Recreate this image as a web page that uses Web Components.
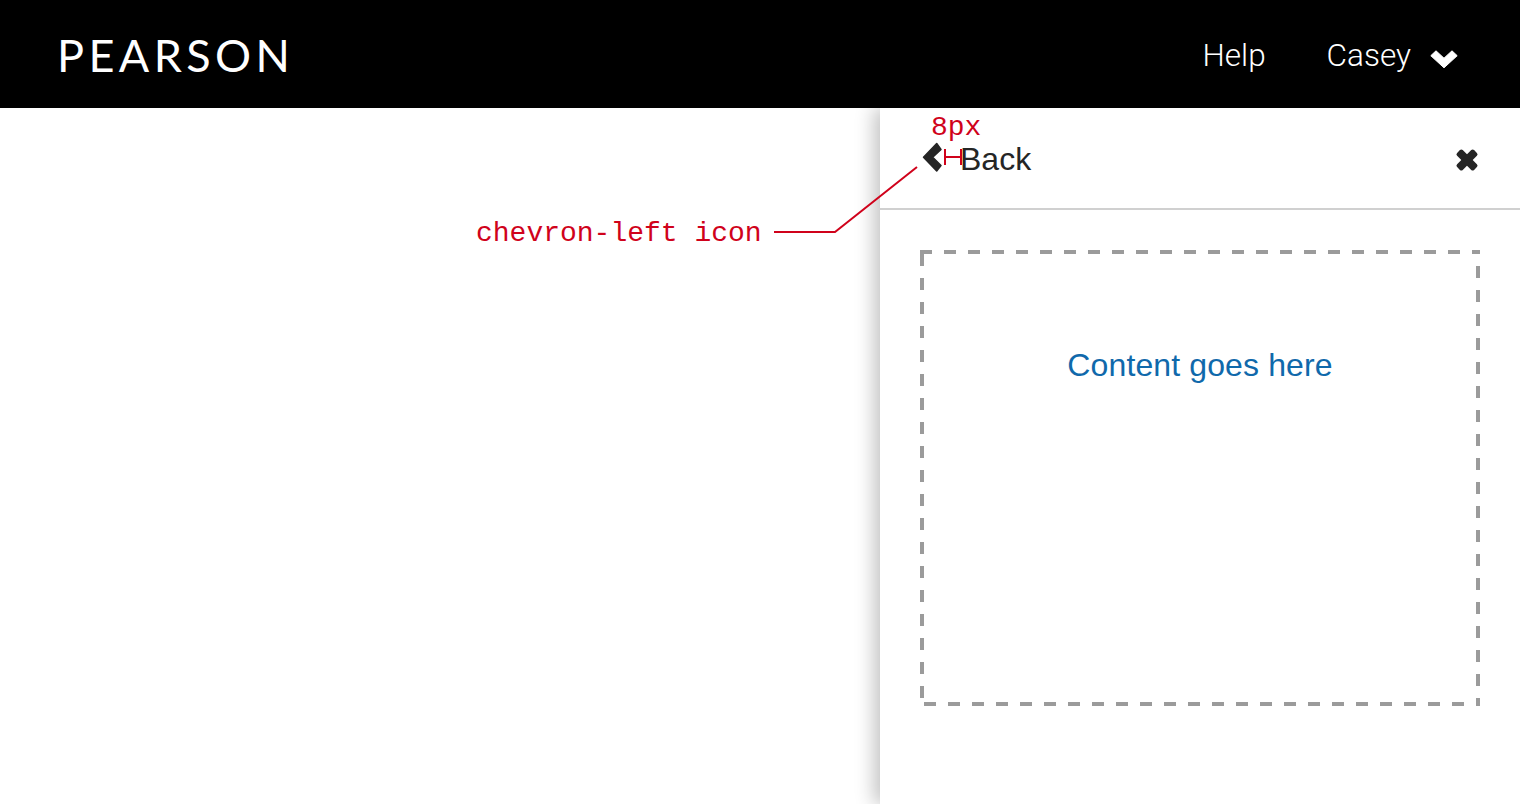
<!DOCTYPE html>
<html>
<head>
<meta charset="utf-8">
<style>
    html, body { margin: 0; height: 100%; }
    body { background: #fff; overflow: hidden; font-family: "Liberation Sans", Arial, sans-serif; }
    app-page { height: 804px; }
</style>
</head>
<body>
<app-page>
    <site-header slot="header" username="Casey"></site-header>
    <side-panel slot="main">
        <content-box>Content goes here</content-box>
    </side-panel>
</app-page>

<template id="page-template">
    <style>
        :host { display: grid; grid-template-rows: 108px 1fr; position: relative; overflow: hidden; }
        main { display: flex; justify-content: flex-end; min-height: 0; }
    </style>
    <slot name="header"></slot>
    <main><slot name="main"></slot></main>
</template>

<template id="header-template">
    <style>
        :host { display: flex; align-items: center; justify-content: space-between; background: #000; color: #fff; padding: 0 60px; }
        #logo { font: 400 45px/1 Lato, "Liberation Sans", sans-serif; letter-spacing: 4.4px; padding-top: 2px; margin-left: -3px; }
        nav { display: flex; align-items: center; font: 300 31.5px/1 Roboto, "Liberation Sans", sans-serif; padding-top: 4px; }
        #help { margin-right: 61px; }
        svg { display: block; width: 30px; height: 20px; margin-left: 19px; margin-top: 8px; }
    </style>
    <div id="logo">PEARSON</div>
    <nav>
        <span id="help">Help</span>
        <span id="user"></span>
        <svg viewBox="0 0 30 20"><path d="M.8 5.700 6 .8 14 8.200 22 .8 27.200 5.700 14 17.800Z" fill="#fff" stroke="#fff" stroke-width="1" stroke-linejoin="round"/></svg>
    </nav>
</template>

<template id="panel-template">
    <style>
        :host { display: flex; flex-direction: column; position: relative; width: 640px; height: 100%; background: #fff; box-shadow: -6px 0 18px rgba(0,0,0,.24); color: #252525; }
        header { display: flex; align-items: center; justify-content: space-between; height: 102px; box-sizing: border-box; padding: 0 40px; border-bottom: 2px solid #d0d0d0; flex: none; }
        #back { display: flex; align-items: center; font-size: 32px; line-height: 1; }
        #back span { padding-top: 2px; }
        #back svg { width: 24px; height: 34px; margin-right: 16px; display: block; }
        #close { display: block; width: 26px; height: 26px; margin-top: 4px; }
        #body { padding: 40px; }
    </style>
    <header>
        <div id="back">
            <svg viewBox="0 0 24 34"><path d="M3.500 16.300 16.700 2.500 21 8.500 12.700 16.300 21 24.500 16.700 30 Z" fill="#252525" stroke="#252525" stroke-width="1.500" stroke-linejoin="round"/></svg>
            <span>Back</span>
        </div>
        <svg id="close" viewBox="0 0 26 26">
            <rect x="1" y="9" width="24" height="8" rx="2" fill="#252525" transform="rotate(45 13 13)"/>
            <rect x="1" y="9" width="24" height="8" rx="2" fill="#252525" transform="rotate(-45 13 13)"/>
        </svg>
    </header>
    <div id="body"><slot></slot></div>
    <spec-note></spec-note>
</template>

<template id="box-template">
    <style>
        :host { display: block; position: relative; height: 456px; box-sizing: border-box; padding-top: 95px; text-align: center; color: #1069ab; font-size: 32px; line-height: 40px; letter-spacing: .12px; }
        svg { position: absolute; inset: 0; width: 100%; height: 100%; }
        path { fill: none; stroke: #9b9b9b; stroke-width: 4; stroke-dasharray: 12 12; }
    </style>
    <svg viewBox="0 0 560 456">
        <path d="M0 2H560"/>
        <path d="M558 16V456"/>
        <path d="M4 454H556"/>
        <path d="M2 4V452"/>
    </svg>
    <slot></slot>
</template>

<template id="note-template">
    <style>
        :host { position: absolute; left: -880px; top: -108px; width: 1520px; height: 804px; pointer-events: none; color: #d0021b; font: 28px/32px "Liberation Mono", monospace; }
        span { position: absolute; white-space: pre; }
        #label { left: 476px; top: 218px; }
        #gap { left: 931px; top: 112px; }
        svg { position: absolute; inset: 0; width: 100%; height: 100%; }
        path { fill: none; stroke: #d0021b; stroke-width: 2; }
    </style>
    <svg viewBox="0 0 1520 804">
        <path d="M774 232H835L917 167"/>
        <path d="M945 149V165M945 157H961M961 149V165"/>
    </svg>
    <span id="label">chevron-left icon</span>
    <span id="gap">8px</span>
</template>

<script>
    function stamp(host, id) {
        host.attachShadow({mode: "open"})
        host.shadowRoot.appendChild(document.getElementById(id).content.cloneNode(true))
    }

    class AppPage extends HTMLElement {
        constructor() { super(); stamp(this, "page-template") }
    }
    class SiteHeader extends HTMLElement {
        constructor() {
            super()
            stamp(this, "header-template")
            this.shadowRoot.getElementById("user").textContent = this.getAttribute("username")
        }
    }
    class SidePanel extends HTMLElement {
        constructor() { super(); stamp(this, "panel-template") }
    }
    class ContentBox extends HTMLElement {
        constructor() { super(); stamp(this, "box-template") }
    }
    class SpecNote extends HTMLElement {
        constructor() { super(); stamp(this, "note-template") }
    }

    customElements.define("app-page", AppPage)
    customElements.define("site-header", SiteHeader)
    customElements.define("side-panel", SidePanel)
    customElements.define("content-box", ContentBox)
    customElements.define("spec-note", SpecNote)
</script>
</body>
</html>
